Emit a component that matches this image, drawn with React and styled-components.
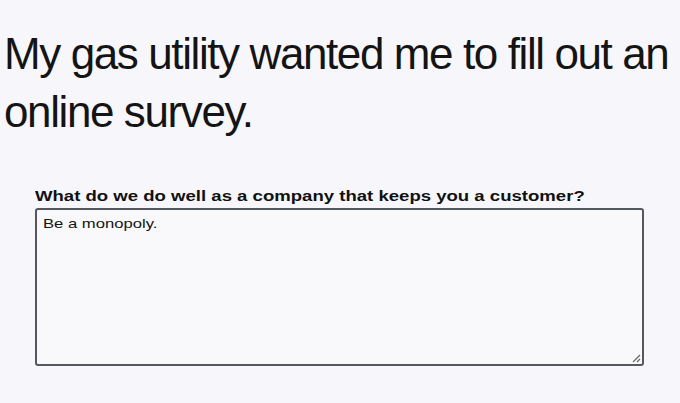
import React from 'react';
import styled, { createGlobalStyle } from 'styled-components';

const GlobalStyle = createGlobalStyle`
  html, body {
    margin: 0;
    padding: 0;
    background: #f7f7fb;
  }
  body {
    width: 680px;
    height: 403px;
    overflow: hidden;
    font-family: "Liberation Sans", Arial, sans-serif;
  }
`;

const Page = styled.div`
  display: flex;
  flex-direction: column;
  padding: 25px 0 0 4px;
`;

const Title = styled.h1`
  margin: 0;
  font-family: "Liberation Sans", Arial, sans-serif;
  font-weight: 400;
  font-size: 44px;
  line-height: 58px;
  letter-spacing: -1.4px;
  color: #141414;
`;

const Survey = styled.div`
  display: flex;
  flex-direction: column;
  margin: 47px 0 0 31px;
  width: 609px;
`;

// the screenshot is stretched sideways, so the form text is widened
const Wide = styled.span`
  display: inline-block;
  transform: scaleX(${p => p.$x || 1.28});
  transform-origin: left center;
  white-space: nowrap;
`;

const Question = styled.label`
  font-weight: 700;
  font-size: 14.5px;
  line-height: 17px;
  color: #111;
  margin-bottom: 3px;
`;

const Answer = styled.div`
  position: relative;
  box-sizing: border-box;
  height: 158px;
  border: 2px solid #55585e;
  border-radius: 3px;
  background: #f9f9fc;
  padding: 6px 6px;
  font-size: 13px;
  line-height: 16px;
  color: #141414;
`;

const Grip = styled.svg`
  position: absolute;
  right: 1px;
  bottom: 1px;
`;

export default function App() {
  return (
    <>
      <GlobalStyle />
      <Page>
        <Title>
          My gas utility wanted me to fill out an
          <br />
          online survey.
        </Title>
        <Survey>
          <Question>
            <Wide>What do we do well as a company that keeps you a customer?</Wide>
          </Question>
          <Answer>
            <Wide>Be a monopoly.</Wide>
            <Grip width="11" height="11" viewBox="0 0 11 11">
              <path d="M10 3 L3 10 M10 7 L7 10" stroke="#666" strokeWidth="1.2" />
            </Grip>
          </Answer>
        </Survey>
      </Page>
    </>
  );
}
